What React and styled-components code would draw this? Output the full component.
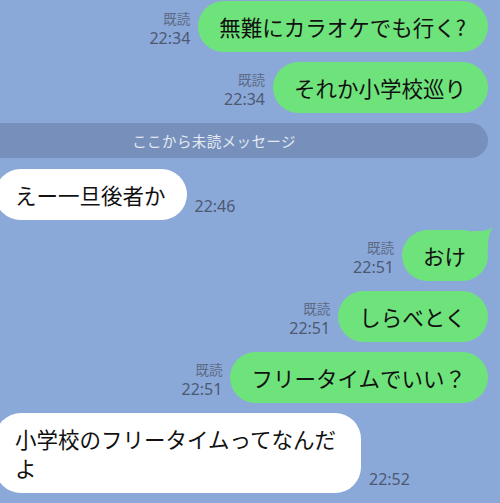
import React from "react";
import styled, { createGlobalStyle } from "styled-components";

const GlobalStyle = createGlobalStyle`
  html, body {
    margin: 0;
    padding: 0;
    background: #8aa9d9;
    overflow: hidden;
  }
  body {
    font-family: "Noto Sans CJK JP", "Noto Sans", sans-serif;
  }
`;

const Screen = styled.div`
  width: 500px;
  height: 503px;
  overflow: hidden;
  background: #8aa9d9;
  padding-top: 1px;
  box-sizing: border-box;
`;

const Row = styled.div`
  display: flex;
  align-items: flex-end;
  justify-content: ${({ mine }) => (mine ? "flex-end" : "flex-start")};
  gap: 8px;
  padding-right: ${({ mine }) => (mine ? "12px" : "0")};
  margin-left: ${({ mine }) => (mine ? "0" : "-5px")};
  margin-bottom: 10px;
`;

const Meta = styled.div`
  display: flex;
  flex-direction: column;
  align-items: ${({ mine }) => (mine ? "flex-end" : "flex-start")};
  margin-bottom: 4px;
`;

const ReadLabel = styled.span`
  font-size: 13.5px;
  line-height: 20px;
  color: #5d6a84;
`;

const Time = styled.span`
  font-family: "Noto Sans", "Liberation Sans", sans-serif;
  font-size: 16px;
  line-height: 20px;
  color: #4d5871;
`;

const Bubble = styled.div`
  position: relative;
  flex-shrink: 0;
  background: ${({ mine }) => (mine ? "#6fe37b" : "#ffffff")};
  color: #111;
  font-size: 21.5px;
  line-height: 29px;
  padding: 11px ${({ mine }) => (mine ? "22px" : "21px")} 11px
    ${({ mine }) => (mine ? "21px" : "20px")};
  border-radius: 26px;
  max-width: 325px;
  word-break: break-all;
`;

const Tail = styled.svg`
  position: absolute;
  top: -3px;
  right: -6px;
  width: 22px;
  height: 22px;
`;

const UnreadBar = styled.div`
  margin-left: -60px;
  margin-right: 12px;
  margin-top: 4px;
  margin-bottom: 11px;
  height: 35px;
  border-radius: 18px;
  background: #7690bb;
  color: #e4e9f2;
  font-size: 14.5px;
  letter-spacing: 0.4px;
  display: flex;
  align-items: center;
  justify-content: center;
`;

const messages = [
  { mine: true, text: "無難にカラオケでも行く?", time: "22:34" },
  { mine: true, text: "それか小学校巡り", time: "22:34" },
  { divider: "ここから未読メッセージ" },
  { mine: false, text: "えー一旦後者か", time: "22:46" },
  { mine: true, text: "おけ", time: "22:51", tail: true },
  { mine: true, text: "しらべとく", time: "22:51" },
  { mine: true, text: "フリータイムでいい？", time: "22:51" },
  { mine: false, text: "小学校のフリータイムってなんだよ", time: "22:52" },
];

function Message({ mine, text, time, tail }) {
  const meta = (
    <Meta mine={mine}>
      {mine && <ReadLabel>既読</ReadLabel>}
      <Time>{time}</Time>
    </Meta>
  );
  return (
    <Row mine={mine}>
      {mine && meta}
      <Bubble mine={mine}>
        {text}
        {tail && (
          <Tail viewBox="0 0 22 22">
            <path d="M0 4 C8 4 14 5 21 0 C17 6 16 12 16 22 L0 22 Z" fill="#6fe37b" />
          </Tail>
        )}
      </Bubble>
      {!mine && meta}
    </Row>
  );
}

export default function App() {
  return (
    <>
      <GlobalStyle />
      <Screen>
        {messages.map((m, i) =>
          m.divider ? (
            <UnreadBar key={i}>{m.divider}</UnreadBar>
          ) : (
            <Message key={i} {...m} />
          )
        )}
      </Screen>
    </>
  );
}
